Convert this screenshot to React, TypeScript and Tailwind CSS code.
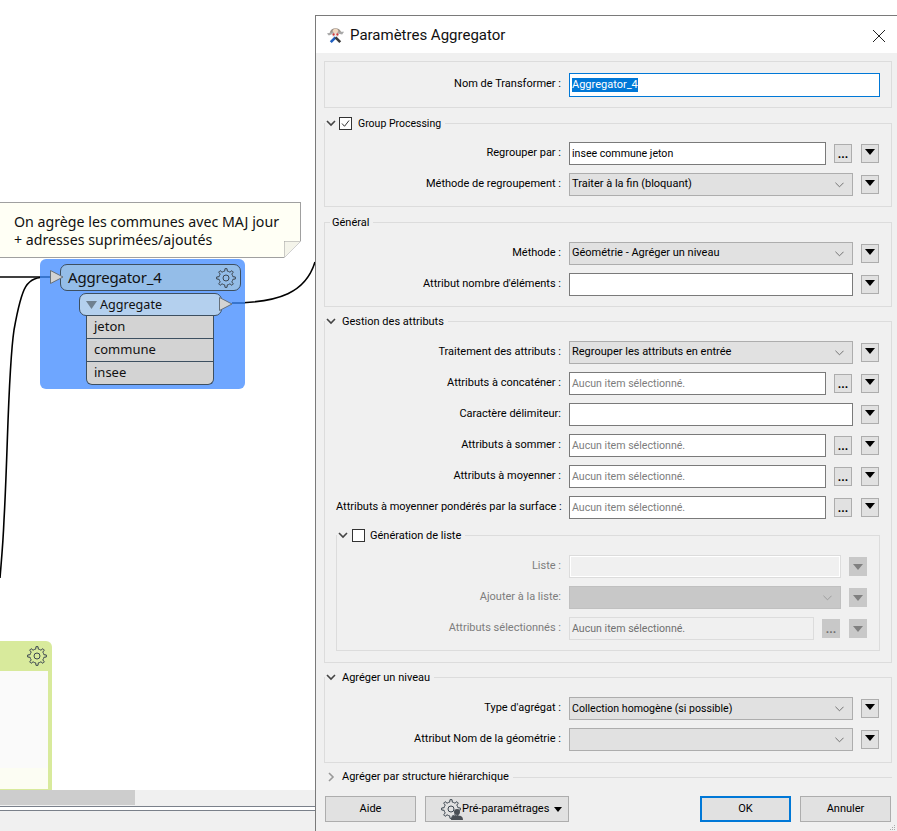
import React from 'react'

const ui = 'font-["Roboto",sans-serif]'

// cog outline, used for the node gears
function gearPath(cx: number, cy: number, outer: number, inner: number, teeth: number) {
  const pts: string[] = []
  const step = (Math.PI * 2) / teeth
  for (let i = 0; i < teeth; i++) {
    const a = i * step
    const list: [number, number][] = [
      [inner, a - step * 0.5],
      [inner, a - step * 0.24],
      [outer, a - step * 0.14],
      [outer, a + step * 0.14],
      [inner, a + step * 0.24],
    ]
    list.forEach(([r, t]) => pts.push(`${(cx + r * Math.cos(t)).toFixed(2)} ${(cy + r * Math.sin(t)).toFixed(2)}`))
  }
  return 'M' + pts.join('L') + 'Z'
}

function Gear({ className }: { className: string }) {
  return (
    <svg viewBox="0 0 20 20" className={className} fill="none" stroke="#3c4650" strokeWidth="1">
      <path d={gearPath(10, 10, 9.4, 7, 8)} strokeLinejoin="round" />
      <circle cx="10" cy="10" r="3" />
    </svg>
  )
}

function Chevron({ open = true }: { open?: boolean }) {
  return (
    <svg viewBox="0 0 10 10" className="w-[10px] h-[10px] shrink-0">
      {open ? (
        <path d="M1 3l4 4 4-4" fill="none" stroke="#444" strokeWidth="1.6" />
      ) : (
        <path d="M3 1l4 4-4 4" fill="none" stroke="#999" strokeWidth="1.6" />
      )}
    </svg>
  )
}

function Checkbox({ checked = false }: { checked?: boolean }) {
  return (
    <span className="w-[13px] h-[13px] bg-white border border-[#333] shrink-0 flex items-center justify-center">
      {checked && (
        <svg viewBox="0 0 11 11" className="w-[11px] h-[11px]">
          <path d="M2 5.500l2.500 2.800L9 2.500" fill="none" stroke="#333" strokeWidth="1" />
        </svg>
      )}
    </span>
  )
}

function ArrowBtn({ disabled = false }: { disabled?: boolean }) {
  return (
    <button
      className={
        disabled
          ? 'w-[18px] h-[19px] bg-[#c8c8c8] border border-[#c8c8c8] flex items-start justify-center pt-[6px] shrink-0'
          : 'w-[18px] h-[19px] bg-[#e1e1e1] border border-[#adadad] flex items-start justify-center pt-[4px] shrink-0'
      }
    >
      <svg viewBox="0 0 10 6" className="w-[10px] h-[6px]">
        <path d="M0 0h10L5 6z" fill={disabled ? '#808080' : '#000'} />
      </svg>
    </button>
  )
}

function DotsBtn({ disabled = false }: { disabled?: boolean }) {
  return (
    <button
      className={
        disabled
          ? 'w-[18px] h-[19px] ml-[8px] bg-[#c8c8c8] border border-[#c8c8c8] text-[#707070] text-[12px] leading-[19px] font-bold flex justify-center shrink-0'
          : 'w-[18px] h-[19px] ml-[8px] bg-[#e1e1e1] border border-[#adadad] text-black text-[12px] leading-[19px] font-bold flex justify-center shrink-0'
      }
    >
      ...
    </button>
  )
}

function Row({ label, disabled = false, className = '', children }: { label: string; disabled?: boolean; className?: string; children: React.ReactNode }) {
  return (
    <div className={`flex items-center h-[23px] ${className}`}>
      <span className={disabled ? 'flex-1 min-w-0 text-right pr-[8px] whitespace-nowrap text-[#7d7d7d]' : 'flex-1 min-w-0 text-right pr-[8px] whitespace-nowrap'}>{label}</span>
      {children}
    </div>
  )
}

function TextInput({ value = '', placeholder = '', width }: { value?: string; placeholder?: string; width: string }) {
  return (
    <div className={`${width} h-[23px] bg-white border border-[#7a7a7a] px-[2px] leading-[22px] text-[10.6px] whitespace-nowrap overflow-hidden shrink-0`}>
      {placeholder ? <span className="text-[#7d7d7d]">{placeholder}</span> : value}
    </div>
  )
}

function Select({ value, small = false }: { value: string; small?: boolean }) {
  return (
    <div className={small ? 'w-[284px] h-[23px] bg-[#e1e1e1] border border-[#adadad] pl-[2px] pr-[8px] flex items-center justify-between text-[10.6px] shrink-0' : 'w-[284px] h-[23px] bg-[#e1e1e1] border border-[#adadad] pl-[2px] pr-[8px] flex items-center justify-between text-[11px] shrink-0'}>
      <span className="whitespace-nowrap">{value}</span>
      <svg viewBox="0 0 10 6" className="w-[9px] h-[6px]">
        <path d="M0.500 0.500L5 5l4.500-4.500" fill="none" stroke="#666" strokeWidth="1" />
      </svg>
    </div>
  )
}

function Attr({ label }: { label: string }) {
  return (
    <Row label={label} className="mt-[8px]">
      <TextInput placeholder="Aucun item sélectionné." width="w-[257px]" />
      <DotsBtn />
      <span className="ml-[9px]"><ArrowBtn /></span>
    </Row>
  )
}

function Full({ label, className = '', children }: { label: string; className?: string; children: React.ReactNode }) {
  return (
    <Row label={label} className={className}>
      {children}
      <span className="ml-[8px]"><ArrowBtn /></span>
    </Row>
  )
}

function Header({ children, className = '' }: { children: React.ReactNode; className?: string }) {
  return (
    <div className={`flex items-center h-[16px] ${className}`}>
      {children}
      <div className="flex-1 h-px bg-[#dcdcdc] ml-[4px]" />
    </div>
  )
}

function Canvas() {
  return (
    <div className="relative w-[315px] h-[831px] bg-white shrink-0 overflow-hidden">
      <svg className="absolute left-0 top-0 w-[315px] h-[640px]" viewBox="0 0 315 640" fill="none">
        <path d="M0 277H50" stroke="#000" strokeWidth="1.6" />
        <path d="M48 277C26 277 22 285 14 330C8 370 8 450 4 520C3 545 1 565 0 578" stroke="#000" strokeWidth="1.6" />
        <path d="M230 303C280 303 306 292 315 262" stroke="#000" strokeWidth="1.6" />
      </svg>

      {/* annotation */}
      <div className="absolute left-[-1px] top-[202px] w-[302px] h-[56px] bg-[#fffff5] border border-[#a0a0a0] pl-[14px] pt-[10px] text-[14.2px] leading-[18px] text-[#111]">
        <p className="whitespace-nowrap">On agrège les communes avec MAJ jour</p>
        <p className="whitespace-nowrap">+ adresses suprimées/ajoutés</p>
        <svg viewBox="0 0 17 17" className="absolute right-[-1px] bottom-[-1px] w-[17px] h-[17px]">
          <path d="M0 0H17L0 17Z" fill="#f4f4ea" stroke="#a0a0a0" />
          <path d="M17 0V17H0Z" fill="#fff" />
        </svg>
      </div>

      {/* transformer node */}
      <div className="absolute left-[40px] top-[259px] w-[205px] h-[130px] bg-[#6ea6ff] rounded-[6px] pt-[5px]">
        <div className="ml-[20px] w-[181px] h-[27px] bg-[#94bde8] border border-[#3d4f60] rounded-[7px] flex items-center justify-between pl-[7px] pr-[4px] text-[15px] tracking-[-0.2px] text-[#111]">
          <span>Aggregator_4</span>
          <Gear className="w-[20px] h-[20px]" />
        </div>
        <div className="ml-[39px] mt-[2px] w-[143px] h-[23px] bg-[#b4d0ee] border border-[#3d4f60] rounded-[7px] flex items-center pl-[6px] gap-[3px] text-[12.6px] text-[#111]">
          <svg viewBox="0 0 11 8" className="w-[11px] h-[8px]">
            <path d="M0 0h11L5.500 8z" fill="#6f8090" />
          </svg>
          <span className="translate-y-px">Aggregate</span>
        </div>
        <div className="ml-[46px] w-[128px] bg-[#d3d3d3] border border-t-0 border-[#3d4f60] rounded-b-[6px] text-[13px] text-[#111]">
          <div className="h-[23px] pl-[7px] leading-[20px] border-b border-[#3d4f60]">jeton</div>
          <div className="h-[23px] pl-[7px] leading-[20px] border-b border-[#3d4f60]">commune</div>
          <div className="h-[22px] pl-[7px] leading-[20px]">insee</div>
        </div>
      </div>
      {/* links turn blue where they run over the node background */}
      <svg className="absolute left-0 top-[259px] w-[315px] h-[60px]" viewBox="0 0 315 60" fill="none">
        <path d="M40 18H52" stroke="#2a68c0" strokeWidth="1.600" />
        <path d="M232 44H245" stroke="#2a68c0" strokeWidth="1.600" />
      </svg>
      <svg viewBox="0 0 14 14" className="absolute left-[50px] top-[270px] w-[14px] h-[14px]">
        <path d="M0.500 0.500L13 7L0.500 13.500Z" fill="#d3d3d3" stroke="#66707a" />
      </svg>
      <svg viewBox="0 0 14 14" className="absolute left-[219px] top-[297px] w-[14px] h-[14px]">
        <path d="M0.500 0.500L13 7L0.500 13.500Z" fill="#d3d3d3" stroke="#66707a" />
      </svg>

      {/* cut off node at the bottom */}
      <div className="absolute left-0 top-[641px] w-[52px] h-[149px] bg-[#d8ea9c] rounded-tr-[6px] pt-[30px] pr-[4px]">
        <Gear className="absolute left-[27px] top-[5px] w-[20px] h-[20px]" />
        <div className="h-[97px] bg-[#fafafa]" />
        <div className="h-[21px] bg-[#fcfdf3]" />
      </div>

      {/* scrollbar and status area */}
      <div className="absolute left-0 right-0 top-[790px] bottom-0 bg-[#f0f0f0]">
        <div className="w-[135px] h-[15px] bg-[#cdcdcd]" />
        <div className="mt-[1px] h-[5px] bg-white border-y border-[#7a808a]" />
      </div>
    </div>
  )
}

function Dialog() {
  return (
    <div className={`w-[582px] shrink-0 mt-[15px] h-[816px] border-l border-t border-[#7a7a7a] bg-[#f0f0f0] flex flex-col text-[11px] text-black ${ui}`}>
      <div className="h-[37px] bg-white flex items-center pl-[10px] pr-[11px] shrink-0">
        <svg viewBox="0 0 20 20" className="w-[19px] h-[19px] shrink-0">
          <path d="M4 8C5 2 15 2 16 8L13 10H7Z" fill="#9a9088" />
          <circle cx="10" cy="7" r="3" fill="#f0d8c0" />
          <path d="M1 9L8 7L8 9L3 11Z" fill="#a8a8a8" />
          <path d="M12 7L19 7L17 10L12 9Z" fill="#a8a8a8" />
          <path d="M6 9H14L13 13H7Z" fill="#e8e8e8" />
          <circle cx="8" cy="10" r="1.200" fill="#d03838" />
          <circle cx="12" cy="10" r="1.200" fill="#d03838" />
          <path d="M9 12L4 17L6 19L11 14Z" fill="#1f5fc0" />
          <path d="M11 12L16 17L14 19L9 14Z" fill="#3a3a3a" />
        </svg>
        <span className="ml-[5px] text-[15px] text-[#111] translate-y-px">Paramètres Aggregator</span>
        <svg viewBox="0 0 14 14" className="w-[14px] h-[14px] ml-auto translate-y-px">
          <path d="M1 1L13 13M13 1L1 13" stroke="#222" strokeWidth="1" />
        </svg>
      </div>

      <div className="flex-1 pl-[8px] pr-[5px] pt-[8px] flex flex-col">
        <div className="h-[47px] bg-[#f0f0f0] border border-[#dcdcdc] flex items-center pr-[11px] shrink-0">
          <span className="flex-1 text-right pr-[8px]">Nom de Transformer :</span>
          <div className="w-[311px] h-[24px] bg-white border border-[#0078d7] pl-[2px] flex items-center text-[11px]">
            <span className="bg-[#0078d7] text-white leading-[14px]">Aggregator_4</span>
          </div>
        </div>

        <Header className="mt-[7px]">
          <span className="ml-[2px] mr-[3px]"><Chevron /></span>
          <Checkbox checked />
          <span className="ml-[6px] text-[10.5px] translate-y-px">Group Processing</span>
        </Header>
        <div className="-mt-[8px] border-l border-r border-b border-[#dcdcdc] pt-[19px] pb-[10px] pr-[12px]">
          <Row label="Regrouper par :">
            <TextInput value="insee commune jeton" width="w-[257px]" />
            <DotsBtn />
            <span className="ml-[9px]"><ArrowBtn /></span>
          </Row>
          <Full label="Méthode de regroupement :" className="mt-[8px]">
            <Select value="Traiter à la fin (bloquant)" />
          </Full>
        </div>

        <Header className="mt-[7px]">
          <div className="w-[6px] h-px bg-[#dcdcdc] mr-[2px]" />
          <span className="translate-y-px">Général</span>
        </Header>
        <div className="-mt-[8px] border-l border-r border-b border-[#dcdcdc] pt-[20px] pb-[10px] pr-[12px]">
          <Full label="Méthode :">
            <Select value="Géométrie - Agréger un niveau" />
          </Full>
          <Full label="Attribut nombre d'éléments :" className="mt-[8px]">
            <TextInput width="w-[284px]" />
          </Full>
        </div>

        <Header className="mt-[6px]">
          <span className="ml-[2px] mr-[6px]"><Chevron /></span>
          <span className="translate-y-px">Gestion des attributs</span>
        </Header>
        <div className="-mt-[8px] border-l border-r border-b border-[#dcdcdc] pt-[20px] pb-[11px] pl-[11px] pr-[12px]">
          <Full label="Traitement des attributs :">
            <Select value="Regrouper les attributs en entrée" />
          </Full>
          <Attr label="Attributs à concaténer :" />
          <Full label="Caractère délimiteur:" className="mt-[8px]">
            <TextInput width="w-[284px]" />
          </Full>
          <Attr label="Attributs à sommer :" />
          <Attr label="Attributs à moyenner :" />
          <Attr label="Attributs à moyenner pondérés par la surface :" />

          <Header className="mt-[8px] -mr-px">
            <span className="ml-[2px] mr-[4px]"><Chevron /></span>
            <Checkbox />
            <span className="ml-[5px] translate-y-px">Génération de liste</span>
          </Header>
          <div className="-mt-[8px] -mr-px border-l border-r border-b border-[#dcdcdc] pt-[20px] pb-[10px] pr-[12px]">
            <Row label="Liste :" disabled>
              <div className="w-[272px] h-[23px] bg-[#f0f0f0] border border-[#dcdcdc] outline outline-white -outline-offset-2" />
              <span className="ml-[8px]"><ArrowBtn disabled /></span>
            </Row>
            <Row label="Ajouter à la liste:" disabled className="mt-[8px]">
              <div className="w-[272px] h-[23px] bg-[#c8c8c8] border border-[#c0c0c0] flex items-center justify-end pr-[8px]">
                <svg viewBox="0 0 10 6" className="w-[9px] h-[6px]">
                  <path d="M0.500 0.500L5 5l4.500-4.500" fill="none" stroke="#999" strokeWidth="1" />
                </svg>
              </div>
              <span className="ml-[8px]"><ArrowBtn disabled /></span>
            </Row>
            <Row label="Attributs sélectionnés :" disabled className="mt-[8px]">
              <div className="w-[245px] h-[23px] bg-[#f0f0f0] border border-[#dcdcdc] px-[2px] leading-[22px] text-[10.6px] text-[#707070] whitespace-nowrap">Aucun item sélectionné.</div>
              <DotsBtn disabled />
              <span className="ml-[9px]"><ArrowBtn disabled /></span>
            </Row>
          </div>
        </div>

        <Header className="mt-[6px]">
          <span className="ml-[2px] mr-[6px]"><Chevron /></span>
          <span className="translate-y-px">Agréger un niveau</span>
        </Header>
        <div className="-mt-[8px] border-l border-r border-b border-[#dcdcdc] pt-[20px] pb-[11px] pr-[12px]">
          <Full label="Type d'agrégat :">
            <Select value="Collection homogène (si possible)" small />
          </Full>
          <Full label="Attribut Nom de la géométrie :" className="mt-[8px]">
            <Select value="" />
          </Full>
        </div>

        <Header className="mt-[6px]">
          <span className="ml-[2px] mr-[6px]"><Chevron open={false} /></span>
          <span>Agréger par structure hiérarchique</span>
        </Header>

        <div className="mt-[11px] flex items-center h-[26px] pl-px">
          <button className="w-[91px] h-[26px] bg-[#e1e1e1] border border-[#adadad]">Aide</button>
          <button className="ml-[9px] w-[144px] h-[26px] bg-[#e1e1e1] border border-[#adadad] flex items-center pl-[15px]">
            <span className="relative w-[20px] h-[20px] mr-[1px]">
              <Gear className="w-[20px] h-[20px]" />
              <svg viewBox="0 0 12 12" className="absolute right-[-2px] bottom-[-1px] w-[12px] h-[12px]">
                <circle cx="6" cy="4" r="3" fill="#4a4f55" />
                <path d="M0 12C0 8 3 7.500 6 7.500S12 8 12 12Z" fill="#4a4f55" />
              </svg>
            </span>
            <span>Pré-paramétrages</span>
            <svg viewBox="0 0 8 5" className="w-[8px] h-[5px] ml-[5px]">
              <path d="M0 0h8L4 5z" fill="#000" />
            </svg>
          </button>
          <button className="ml-[131px] w-[91px] h-[26px] bg-[#e1e1e1] border-2 border-[#0078d7]">OK</button>
          <button className="ml-[9px] w-[91px] h-[26px] bg-[#e1e1e1] border border-[#adadad]">Annuler</button>
        </div>
      </div>
      <div className="absolute right-[2px] bottom-[1px] grid grid-cols-3 gap-[1px]">
        <span /><span /><span className="w-[1px] h-[1px] bg-[#aaa]" />
        <span /><span className="w-[1px] h-[1px] bg-[#aaa]" /><span className="w-[1px] h-[1px] bg-[#aaa]" />
        <span className="w-[1px] h-[1px] bg-[#aaa]" /><span className="w-[1px] h-[1px] bg-[#aaa]" /><span className="w-[1px] h-[1px] bg-[#aaa]" />
      </div>
    </div>
  )
}

export default function App() {
  return (
    <div className="relative w-[897px] h-[831px] flex overflow-hidden bg-white">
      <Canvas />
      <Dialog />
    </div>
  )
}
